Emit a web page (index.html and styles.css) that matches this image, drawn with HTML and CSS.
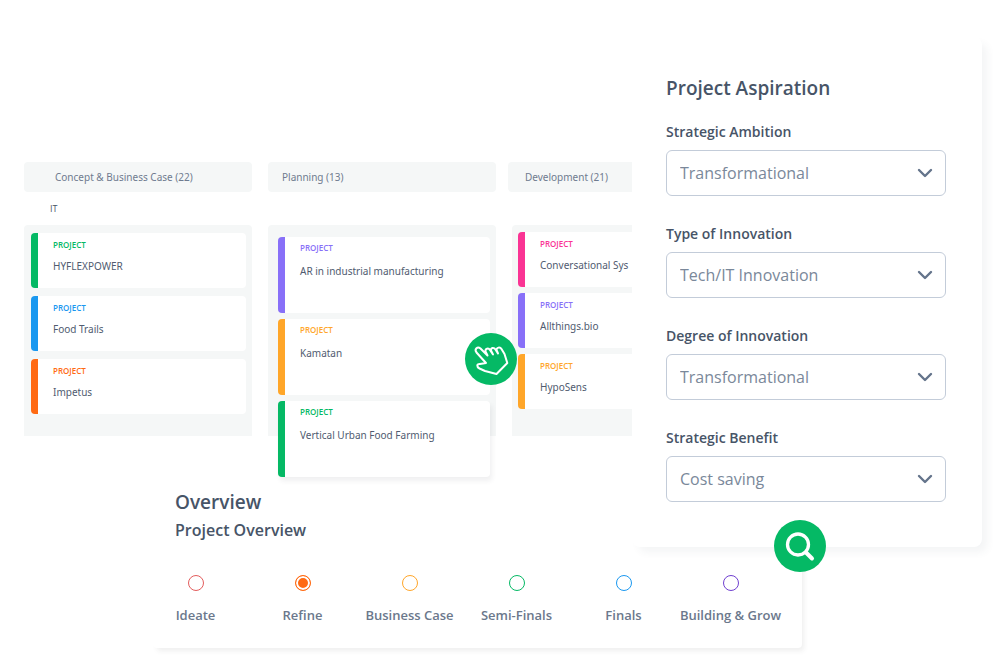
FILE: index.html
```
<!DOCTYPE html>
<html lang="en">
<head>
<meta charset="utf-8">
<meta name="viewport" content="width=device-width, initial-scale=1">
<title>Project portfolio</title>
<link rel="stylesheet" href="styles.css">
</head>
<body>
<main class="page">
  <section class="board" aria-label="Project board">
    <div class="column column-wide-label">
      <h2 class="column-head">Concept &amp; Business Case (22)</h2>
      <p class="lane">IT</p>
      <div class="column-body">
        <article class="card green"><span class="tag">PROJECT</span><h3 class="name">HYFLEXPOWER</h3></article>
        <article class="card blue"><span class="tag">PROJECT</span><h3 class="name">Food Trails</h3></article>
        <article class="card orange"><span class="tag">PROJECT</span><h3 class="name">Impetus</h3></article>
      </div>
    </div>
    <div class="column column-tall">
      <h2 class="column-head">Planning (13)</h2>
      <p class="lane"></p>
      <div class="column-body">
        <article class="card violet"><span class="tag">PROJECT</span><h3 class="name">AR in industrial manufacturing</h3></article>
        <article class="card amber"><span class="tag">PROJECT</span><h3 class="name">Kamatan</h3></article>
        <article class="card green dragged"><span class="tag">PROJECT</span><h3 class="name">Vertical Urban Food Farming</h3></article>
      </div>
      <div class="badge badge-hand">
        <svg viewBox="0 0 52 52" fill="none" stroke="#fff" stroke-width="2" stroke-linejoin="round" stroke-linecap="round" aria-hidden="true">
          <path d="M21 30 L11.500 19.500 C9 16 12.500 13 15.500 15.500 L22.500 22.500 L20.500 18.500 C20 15.500 23.500 14.500 25 17 L28 21.500 L26 17.500 C25.500 14.500 29 14 30.500 16.500 L33 20.500 L31.500 17 C31.500 14.500 35 13.500 36.500 16 L39.500 21 L42.300 30 L31.500 41 L20 38 L14.500 35.500 C11.500 34 11.500 30.500 15 31 Z"/>
        </svg>
      </div>
    </div>
    <div class="column column-cut">
      <h2 class="column-head">Development (21)</h2>
      <p class="lane"></p>
      <div class="column-body">
        <article class="card pink"><span class="tag">PROJECT</span><h3 class="name">Conversational Sys</h3></article>
        <article class="card violet"><span class="tag">PROJECT</span><h3 class="name">Allthings.bio</h3></article>
        <article class="card amber"><span class="tag">PROJECT</span><h3 class="name">HypoSens</h3></article>
      </div>
    </div>
  </section>

  <form class="aspiration">
    <h2 class="title">Project Aspiration</h2>
    <div class="field">
      <label for="ambition">Strategic Ambition</label>
      <div class="select-wrap">
        <select id="ambition"><option>Transformational</option></select>
        <svg class="chevron" viewBox="0 0 16 10" aria-hidden="true"><path d="M2 2 L8 8 L14 2"/></svg>
      </div>
    </div>
    <div class="field">
      <label for="type">Type of Innovation</label>
      <div class="select-wrap">
        <select id="type"><option>Tech/IT Innovation</option></select>
        <svg class="chevron" viewBox="0 0 16 10" aria-hidden="true"><path d="M2 2 L8 8 L14 2"/></svg>
      </div>
    </div>
    <div class="field">
      <label for="degree">Degree of Innovation</label>
      <div class="select-wrap">
        <select id="degree"><option>Transformational</option></select>
        <svg class="chevron" viewBox="0 0 16 10" aria-hidden="true"><path d="M2 2 L8 8 L14 2"/></svg>
      </div>
    </div>
    <div class="field">
      <label for="benefit">Strategic Benefit</label>
      <div class="select-wrap">
        <select id="benefit"><option>Cost saving</option></select>
        <svg class="chevron" viewBox="0 0 16 10" aria-hidden="true"><path d="M2 2 L8 8 L14 2"/></svg>
      </div>
    </div>
    <div class="badge badge-search">
      <svg viewBox="0 0 52 52" fill="none" stroke="#fff" stroke-linecap="round" aria-hidden="true">
        <circle cx="24" cy="24.500" r="10.500" stroke-width="3.300"/>
        <path d="M32 32.500 L38 38.500" stroke-width="4"/>
      </svg>
    </div>
  </form>

  <section class="overview">
    <h2 class="title">Overview</h2>
    <h3 class="subtitle">Project Overview</h3>
    <div class="steps" role="radiogroup" aria-label="Project stage">
      <label class="step red"><input type="radio" name="stage">Ideate</label>
      <label class="step orange"><input type="radio" name="stage" checked>Refine</label>
      <label class="step amber"><input type="radio" name="stage">Business Case</label>
      <label class="step green"><input type="radio" name="stage">Semi-Finals</label>
      <label class="step blue"><input type="radio" name="stage">Finals</label>
      <label class="step purple"><input type="radio" name="stage">Building &amp; Grow</label>
    </div>
  </section>
</main>
</body>
</html>
```
FILE: styles.css
```
* { box-sizing: border-box; }

body {
  margin: 0;
  background: #fff;
  color: #475467;
  font-family: "Open Sans", "Noto Sans", sans-serif;
}

h2, h3, p { margin: 0; font-weight: 400; }

.green { --accent: #05b965; }
.blue { --accent: #1a98f0; }
.orange { --accent: #ff6a13; }
.violet { --accent: #8870f8; }
.amber { --accent: #ffa629; }
.pink { --accent: #fa3494; }
.red { --accent: #e35d5d; }
.purple { --accent: #7040d0; }

.page {
  display: grid;
  grid-template-columns: minmax(0, 1fr) 350px;
  padding: 0 18px 15px 0;
}

/* Board */
.board {
  display: flex;
  align-items: flex-start;
  gap: 16px;
  padding: 162px 0 0 24px;
  align-self: start;
}

.column { position: relative; flex: 0 0 228px; }
.column-cut { flex: 1 1 0; min-width: 0; margin-left: -4px; overflow: hidden; }

.column-head,
.name {
  font-family: "Noto Sans", "Open Sans", sans-serif;
  font-size: 10px;
  white-space: nowrap;
}

.column-head {
  padding: 0 14px;
  border-radius: 4px;
  background: #f5f7f7;
  color: #6f7b8f;
  line-height: 30px;
}

.column-wide-label .column-head { padding-left: 31px; }
.column-cut .column-head { padding: 0 0 0 17px; border-radius: 4px 0 0 4px; }

.lane {
  height: 33px;
  padding-left: 26px;
  color: #475467;
  font-size: 9px;
  line-height: 33px;
}

.column-body {
  display: flex;
  flex-direction: column;
  gap: 8px;
  height: 211px;
  padding: 8px 6px 0 7px;
  border-radius: 4px 4px 0 0;
  background: #f5f7f7;
}

.column-tall .column-body { gap: 6px; padding: 12px 6px 0 10px; }
.column-cut .column-body { gap: 6px; margin-left: 4px; padding: 7px 0 0 6px; border-radius: 4px 0 0 0; }

.card {
  flex: none;
  height: 55px;
  padding: 6px 0 0 15px;
  border-left: 7px solid var(--accent);
  border-radius: 4px;
  background: #fff;
}

.column-tall .card { height: 76px; padding-top: 5px; }
.column-cut .card { border-radius: 4px 0 0 4px; }
.dragged { box-shadow: 2px 4px 5px rgba(60, 70, 80, 0.08); }

.tag {
  display: block;
  color: var(--accent);
  font-size: 8px;
  font-weight: 600;
  line-height: 12px;
}

.name {
  margin-top: 7px;
  color: #505b70;
  line-height: 16px;
}

.column-tall .name { margin-top: 9px; }

/* Round badges lying over the panels */
.badge {
  position: absolute;
  width: 52px;
  height: 52px;
  border-radius: 50%;
  background: #05b965;
}

.badge svg { display: block; width: 52px; height: 52px; }
.badge-hand { z-index: 2; top: 171px; right: -21px; }
.badge-search { right: 156px; bottom: -25px; }

/* Aspiration panel */
.aspiration {
  position: relative;
  z-index: 1;
  margin-top: 37px;
  padding: 37px 36px 45px 34px;
  border-radius: 8px;
  background: #fff;
  box-shadow: 6px 6px 8px -1px rgba(50, 60, 90, 0.06);
}

.title { font-size: 19px; font-weight: 600; line-height: 28px; }
.aspiration .title { margin-bottom: 20px; }

.field { display: grid; gap: 8px; }
.field + .field { margin-top: 28px; }
.field label { font-size: 14px; font-weight: 600; line-height: 20px; }

.select-wrap { position: relative; }

.select-wrap select {
  display: block;
  width: 100%;
  height: 46px;
  padding: 0 40px 0 13px;
  border: 1px solid #c3ccd9;
  border-radius: 6px;
  appearance: none;
  background: #fff;
  color: #7a889a;
  font: inherit;
  font-size: 16px;
}

.chevron {
  position: absolute;
  top: 18px;
  right: 13px;
  width: 16px;
  height: 10px;
  fill: none;
  stroke: #64748b;
  stroke-width: 2.4;
  stroke-linecap: round;
  stroke-linejoin: round;
  pointer-events: none;
}

/* Stage overview, tucked under the aspiration panel */
.overview {
  grid-column: 1 / -1;
  margin: -59px 180px 0 153px;
  padding-bottom: 23px;
  border-radius: 4px;
  box-shadow: 3px 4px 5px -1px rgba(50, 50, 50, 0.08);
}

.overview .title, .subtitle { padding-left: 22px; }
.subtitle { font-size: 16px; font-weight: 600; line-height: 28px; }

.steps {
  display: grid;
  grid-template-columns: repeat(6, 1fr);
  margin: 31px 18px 0 -11px;
}

.step {
  display: flex;
  flex-direction: column;
  align-items: center;
  gap: 14px;
  color: #6b788c;
  font-size: 13px;
  font-weight: 600;
  line-height: 20px;
  white-space: nowrap;
}

.step input {
  width: 16px;
  height: 16px;
  margin: 0;
  border: 1px solid var(--accent);
  border-radius: 50%;
  appearance: none;
}

.step input:checked {
  background: var(--accent);
  box-shadow: inset 0 0 0 2px #fff;
}
```
